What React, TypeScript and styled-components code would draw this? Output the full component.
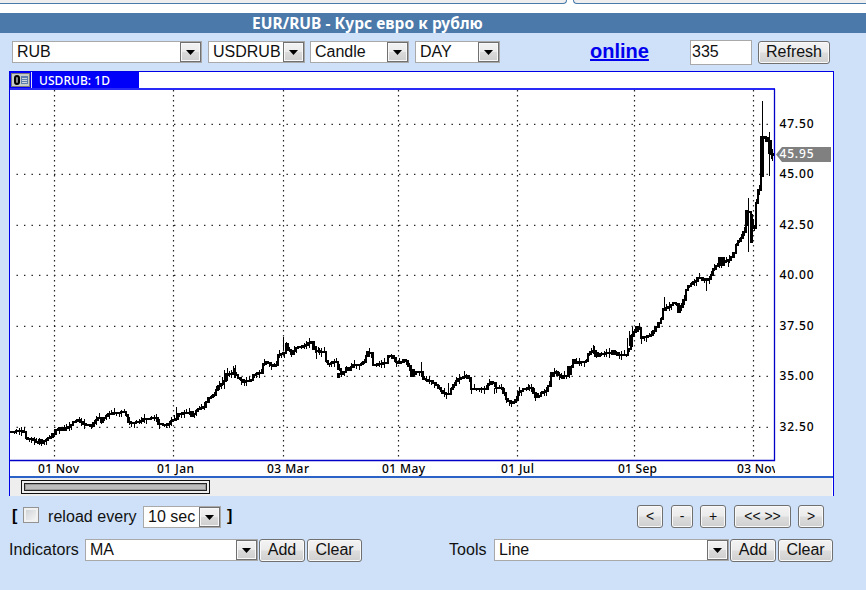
import React from "react";
import styled, { createGlobalStyle } from "styled-components";

const GlobalStyle = createGlobalStyle`
  * { box-sizing: border-box; }
  body { margin: 0; background: #cee1f9; overflow: hidden; }
`;

const Page = styled.div`
  width: 866px;
  height: 590px;
  overflow: hidden;
  background: #cee1f9;
  font: 16px/22px "Liberation Sans", Arial, sans-serif;
  color: #111;
`;

const TabStrip = styled.div`
  display: flex;
  gap: 6px;
  height: 13px;
  background: #fff;
`;

const TabEdge = styled.div<{ $first?: boolean }>`
  height: 4px;
  background: #eee;
  border-bottom: 1px solid #4779a9;
  ${(p) =>
    p.$first
      ? "width: 567px; border-right: 1px solid #4779a9; border-bottom-right-radius: 4px;"
      : "flex: 1; border-left: 1px solid #4779a9; border-bottom-left-radius: 4px;"}
`;

const TitleBar = styled.h1`
  margin: 0;
  height: 20px;
  padding-left: 252px;
  background: #4b79aa;
  color: #fff;
  font: bold 15.5px/21px "Noto Sans", sans-serif;
  letter-spacing: 0.04px;
  white-space: nowrap;
`;

const TopControls = styled.div`
  display: flex;
  align-items: flex-start;
  height: 38px;
  padding: 8px 0 0 12px;
`;

const SelectFrame = styled.div<{ $w: number; $ml?: number }>`
  display: flex;
  flex: none;
  width: ${(p) => p.$w}px;
  height: 22px;
  margin-left: ${(p) => p.$ml ?? 0}px;
  border: 1px solid #a9a9a9;
  background: #fff;
`;

const NativeSelect = styled.select`
  appearance: none;
  flex: 1;
  min-width: 0;
  height: 20px;
  padding: 0 0 1px 4px;
  border: 0;
  background: #fff;
  color: #111;
  font: 16px/19px "Liberation Sans", Arial, sans-serif;
`;

const ArrowBox = styled.span`
  display: flex;
  align-items: center;
  justify-content: center;
  width: 21px;
  height: 20px;
  border: 1px solid #707070;
  background: linear-gradient(#f3f3f3 0%, #ebebeb 48%, #dadada 52%, #cfcfcf 100%);
  box-shadow: inset 0 0 0 1px #f8f8f8;
`;

const OnlineLink = styled.a`
  margin-left: 90px;
  width: 59px;
  color: #0000ee;
  font: bold 20px/20px "Liberation Sans", Arial, sans-serif;
  text-decoration: underline;
`;

const CountInput = styled.input`
  width: 62px;
  height: 25px;
  margin: -1px 0 0 41px;
  padding: 0 2px 2px 1px;
  border: 1px solid #a9a9a9;
  background: #fff;
  color: #111;
  font: 16px "Liberation Sans", Arial, sans-serif;
`;

const PushButton = styled.button<{ $w: number; $ml?: number; $small?: boolean }>`
  flex: none;
  width: ${(p) => p.$w}px;
  height: 23px;
  margin: ${(p) => (p.$small ? -1 : 0)}px 0 0 ${(p) => p.$ml ?? 0}px;
  padding: 0 0 ${(p) => (p.$small ? 2 : 1)}px;
  border: 1px solid #707070;
  border-radius: 3px;
  background: linear-gradient(#f3f3f3 0%, #ebebeb 48%, #dddddd 52%, #cfcfcf 100%);
  box-shadow: inset 0 0 0 1px #f9f9f9;
  color: #111;
  font: ${(p) => (p.$small ? 14 : 16)}px/18px "Liberation Sans", Arial, sans-serif;
  white-space: nowrap;
`;

const ChartFrame = styled.section`
  width: 825px;
  height: 425px;
  margin-left: 9px;
  border: 1px solid #0000e6;
  border-bottom: 0;
  background: #fff;
`;

const ChartHead = styled.header`
  display: flex;
  height: 16px;
`;

const SymbolTab = styled.div`
  display: flex;
  width: 129px;
  height: 16px;
  padding-left: 1px;
  background: #0000fa;
`;

const Drawing = styled.svg`
  display: block;
  flex: none;
`;

const ScrollTrack = styled.div`
  height: 18px;
  padding: 2px 0 0 11px;
  background: #eee;
  border-right: 1px solid #fff;
`;

const ScrollThumb = styled.div`
  width: 189px;
  height: 14px;
  padding: 2px;
  border: 1.5px solid #111;
  background: #eee;
`;

const ThumbCore = styled.div`
  height: 8px;
  border: 1px solid #222;
  background: #bdbdbd;
  box-shadow: inset 0 0 0 1px #999;
`;

const Row = styled.div<{ $top: number; $left: number }>`
  display: flex;
  align-items: flex-start;
  padding: ${(p) => p.$top}px 0 0 ${(p) => p.$left}px;
`;

const Label = styled.span<{ $w: number; $ml?: number }>`
  flex: none;
  width: ${(p) => p.$w}px;
  margin-left: ${(p) => p.$ml ?? 0}px;
  white-space: nowrap;
  letter-spacing: 0.05px;
`;

const Bracket = styled.b<{ $w: number; $ml?: number }>`
  flex: none;
  width: ${(p) => p.$w}px;
  margin: -1px 0 0 ${(p) => p.$ml ?? 0}px;
  color: #000;
  font-weight: 700;
`;

const CheckBox = styled.input`
  appearance: none;
  width: 16px;
  height: 16px;
  margin: 1px 9px 0 0;
  border: 1px solid #939393;
  background: linear-gradient(135deg, #c9cdd1, #fafafa);
  box-shadow: inset 0 0 0 2px #f1f1f1;
`;

type SelectProps = { value: string; w: number; ml?: number };

const Select = ({ value, w, ml }: SelectProps) => (
  <SelectFrame $w={w} $ml={ml}>
    <NativeSelect defaultValue={value}>
      <option>{value}</option>
    </NativeSelect>
    <ArrowBox>
      <Drawing width="9" height="5">
        <path d="M0 0H9L4.5 5Z" fill="#000" />
      </Drawing>
    </ArrowBox>
  </SelectFrame>
);

const PRICES =
  "10,432 15,431 22,431 25,438 32,440 35,442 40,443 43,441 50,437 55,430 62,428 68,427 72,422 78,420 83,424 90,426 93,422 97,417 100,422 103,417 107,414 115,413 123,412 126,417 128,423 137,422 143,419 155,418 157,424 167,425 170,421 175,419 177,414 187,413 192,415 197,409 202,408 203,405 207,398 213,395 216,387 222,382 225,375 232,373 237,377 242,382 250,380 253,374 260,373 263,362 268,363 271,366 276,365 277,355 283,353 284,344 287,345 288,355 292,353 293,348 303,346 307,343 312,342 313,351 323,352 326,365 332,362 337,362 338,375 342,373 344,367 347,370 352,365 357,365 363,362 366,353 370,353 372,365 385,363 387,356 392,356 394,362 399,363 401,360 406,361 408,367 411,376 414,372 420,372 422,379 432,382 437,387 442,393 447,395 450,389 456,379 465,376 468,378 470,389 485,389 488,383 492,381 494,388 502,388 503,398 510,403 515,400 517,392 523,389 530,388 533,394 537,397 540,393 547,390 549,375 555,372 560,377 567,375 570,367 573,361 578,363 585,361 588,353 593,351 597,355 607,353 613,352 618,355 627,355 628,342 631,333 635,330 638,328 640,338 650,335 654,328 660,319 662,309 668,307 674,302 677,308 682,306 683,293 687,286 692,282 697,280 698,275 702,280 707,280 710,275 713,268 719,263 727,260 732,255 734,246 740,238 745,225 747,210 751,223 752,242 753,213 754,203 757,202 758,177 761,176 761,137 765,138 768,142 769,154 772,155"
    .split(" ")
    .map((p) => p.split(",").map(Number));

function priceAt(x: number) {
  let i = 1;
  while (i < PRICES.length - 1 && PRICES[i][0] < x) i++;
  const [x0, y0] = PRICES[i - 1];
  const [x1, y1] = PRICES[i];
  const t = x1 === x0 ? 1 : Math.min(1, (x - x0) / (x1 - x0));
  return Math.round(y0 + (y1 - y0) * t);
}

const candles: { x: number; a: number; b: number; up: number; down: number }[] = [];
for (let i = 0, x = 10; x <= 770; i++, x += 2.5) {
  candles.push({
    x: Math.round(x),
    a: priceAt(x),
    b: priceAt(x + 2.5),
    up: (i * 7) % 6,
    down: (i * 11) % 5,
  });
}

/* x, top, bottom of the longer shadows */
const SHADOWS = [
  [176, 407, 420], [283, 337, 350], [222, 377, 386], [224, 370, 389], [227, 368, 381],
  [233, 366, 374], [235, 365, 378], [241, 379, 385], [315, 348, 353], [316, 352, 359],
  [318, 347, 353], [421, 362, 373], [448, 383, 393], [464, 371, 377], [494, 388, 394],
  [511, 403, 407], [528, 384, 390], [535, 395, 401], [554, 368, 376], [593, 345, 354],
  [627, 338, 352], [629, 331, 346], [632, 327, 347], [641, 333, 344], [664, 297, 311],
  [679, 303, 312], [706, 278, 291], [728, 259, 267], [748, 198, 252], [762, 101, 162],
  [769, 132, 176], [772, 149, 161],
];
/* x, y, width, height of the wide bodies */
const BODIES = [
  [38, 439, 5, 5], [58, 427, 8, 4], [190, 411, 4, 6], [225, 373, 3, 8], [312, 341, 3, 9],
  [337, 373, 3, 5], [366, 351, 4, 6], [410, 369, 4, 8], [490, 381, 3, 4], [535, 393, 4, 5],
  [550, 372, 5, 5], [561, 375, 4, 4], [567, 366, 4, 8], [572, 359, 4, 5], [594, 353, 7, 4],
  [611, 350, 5, 5], [635, 326, 4, 6], [662, 308, 5, 3], [677, 305, 4, 8], [701, 278, 5, 3],
  [718, 257, 7, 9], [745, 210, 4, 15], [750, 214, 3, 29], [760, 136, 5, 3], [760, 136, 2, 40],
  [765, 139, 4, 3], [768, 142, 2, 12],
];

const MONTHS: [number, string, number, number][] = [
  [54, "01 Nov", 38, 41], [173, "01 Jan", 157, 37], [283, "03 Mar", 267, 42],
  [398, "01 May", 382, 43], [517, "01 Jul", 501, 33], [634, "01 Sep", 618, 39],
  [753, "03 Nov", 737, 41],
];
const LEVELS: [number, string][] = [
  [124, "47.50"], [174, "45.00"], [225, "42.50"], [275, "40.00"],
  [326, "37.50"], [376, "35.00"], [427, "32.50"],
];

const PriceChart = () => (
  <Drawing
    width="823"
    height="390"
    viewBox="10 88 823 390"
    fontFamily='"Noto Sans", sans-serif'
    fontSize="12"
    fontWeight="500"
    fill="#000"
  >
    <path d="M10 89H775" stroke="#2a2af6" strokeWidth="2" />
    <path d="M774.5 89V460.5H10" fill="none" stroke="#0000c8" strokeWidth="1.3" />
    <path d="M10 477H833" stroke="#2a62c8" strokeWidth="2" />
    {MONTHS.map(([x]) => (
      <path key={x} d={`M${x + 0.5} 90V457`} stroke="#222" strokeWidth="1.2" strokeDasharray="1.4 3.6" />
    ))}
    {LEVELS.map(([y]) => (
      <path key={y} d={`M16.5 ${y + 0.3}H770`} stroke="#222" strokeWidth="1.2" strokeDasharray="1.4 6.1" />
    ))}
    <g shapeRendering="crispEdges">
      {candles.map(({ x, a, b, up, down }) => (
        <React.Fragment key={x}>
          <rect x={x} y={a - 1} width="3" height="2" />
          <rect x={x + 2} y={Math.min(a, b) - 1} width="2" height={Math.abs(b - a) + 2} />
          <rect x={x + 1} y={a - up} width="1" height={up + down + 1} />
        </React.Fragment>
      ))}
      {SHADOWS.map(([x, top, bottom]) => (
        <rect key={x} x={x} y={top} width="1" height={bottom - top} />
      ))}
      {BODIES.map(([x, y, w, h], i) => (
        <rect key={i} x={x} y={y} width={w} height={h} />
      ))}
    </g>
    {LEVELS.map(([y, text]) => (
      <text key={y} x="779.5" y={y + 4} textLength="34">{text}</text>
    ))}
    <path d="M776 154.5L782 147H831V162H782Z" fill="#808080" />
    <text x="779.5" y="158" textLength="34" fill="#fff">45.95</text>
    <clipPath id="dates"><rect x="10" y="461" width="765" height="16" /></clipPath>
    <g clipPath="url(#dates)">
      {MONTHS.map(([, text, x, width]) => (
        <text key={x} x={x} y="473" textLength={width}>{text}</text>
      ))}
    </g>
  </Drawing>
);

export default function App() {
  return (
    <Page>
      <GlobalStyle />
      <TabStrip>
        <TabEdge $first />
        <TabEdge />
      </TabStrip>
      <TitleBar>EUR/RUB - Курс евро к рублю</TitleBar>
      <TopControls>
        <Select value="RUB" w={190} />
        <Select value="USDRUB" w={97} ml={6} />
        <Select value="Candle" w={99} ml={5} />
        <Select value="DAY" w={85} ml={6} />
        <OnlineLink href="#">online</OnlineLink>
        <CountInput defaultValue="335" />
        <PushButton $w={72} $ml={6}>Refresh</PushButton>
      </TopControls>
      <ChartFrame>
        <ChartHead>
          <SymbolTab>
            <Drawing width="126" height="16">
              <rect x="0.5" y="1.5" width="18" height="13" fill="#c6ccc8" stroke="#777" />
              <path d="M10 4H17V12H10Z" fill="#5d7fae" />
              <path d="M11 6.5H16M11 8.5H16M11 10.5H16" stroke="#cdd6e0" />
              <rect x="4" y="4" width="4" height="8" rx="2" fill="#888" stroke="#000" strokeWidth="2" />
              <path d="M20.5 0V16" stroke="#ddf" />
              <text x="28" y="13" textLength="71" fill="#fff" fontFamily='"Noto Sans", sans-serif' fontSize="12" fontWeight="500">USDRUB: 1D</text>
            </Drawing>
          </SymbolTab>
        </ChartHead>
        <PriceChart />
        <ScrollTrack>
          <ScrollThumb><ThumbCore /></ScrollThumb>
        </ScrollTrack>
      </ChartFrame>
      <Row $top={10} $left={12}>
        <Bracket $w={11}>[</Bracket>
        <CheckBox type="checkbox" />
        <Label $w={95}>reload every</Label>
        <Select value="10 sec" w={78} />
        <Bracket $w={6} $ml={6}>]</Bracket>
        <PushButton $w={26} $ml={404} $small>&lt;</PushButton>
        <PushButton $w={22} $ml={8} $small>-</PushButton>
        <PushButton $w={26} $ml={7} $small>+</PushButton>
        <PushButton $w={57} $ml={8} $small>&lt;&lt; &gt;&gt;</PushButton>
        <PushButton $w={26} $ml={7} $small>&gt;</PushButton>
      </Row>
      <Row $top={11} $left={9}>
        <Label $w={76}>Indicators</Label>
        <Select value="MA" w={173} />
        <PushButton $w={46} $ml={1}>Add</PushButton>
        <PushButton $w={55} $ml={2}>Clear</PushButton>
        <Label $w={45} $ml={87}>Tools</Label>
        <Select value="Line" w={235} />
        <PushButton $w={46} $ml={1}>Add</PushButton>
        <PushButton $w={55} $ml={2}>Clear</PushButton>
      </Row>
    </Page>
  );
}
